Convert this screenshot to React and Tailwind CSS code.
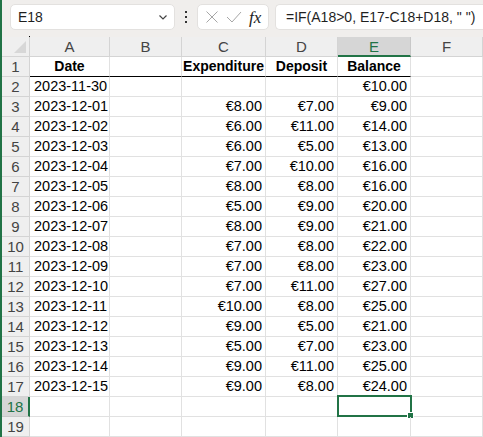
import React from "react";

const rows = [
  ["2023-11-30", "", "", "€10.00"],
  ["2023-12-01", "€8.00", "€7.00", "€9.00"],
  ["2023-12-02", "€6.00", "€11.00", "€14.00"],
  ["2023-12-03", "€6.00", "€5.00", "€13.00"],
  ["2023-12-04", "€7.00", "€10.00", "€16.00"],
  ["2023-12-05", "€8.00", "€8.00", "€16.00"],
  ["2023-12-06", "€5.00", "€9.00", "€20.00"],
  ["2023-12-07", "€8.00", "€9.00", "€21.00"],
  ["2023-12-08", "€7.00", "€8.00", "€22.00"],
  ["2023-12-09", "€7.00", "€8.00", "€23.00"],
  ["2023-12-10", "€7.00", "€11.00", "€27.00"],
  ["2023-12-11", "€10.00", "€8.00", "€25.00"],
  ["2023-12-12", "€9.00", "€5.00", "€21.00"],
  ["2023-12-13", "€5.00", "€7.00", "€23.00"],
  ["2023-12-14", "€9.00", "€11.00", "€25.00"],
  ["2023-12-15", "€9.00", "€8.00", "€24.00"],
  ["", "", "", ""],
  ["", "", "", ""],
];

const cols = ["A", "B", "C", "D", "E", "F"];
const grid = "grid grid-cols-[28px_80px_72px_84px_72px_73px_72px]";
const cell = "h-[20px] border-r border-b border-[#e1e1e1] text-[14.5px] leading-[19px] text-black whitespace-nowrap overflow-visible";
const head = "h-[20px] bg-[#efefef] border-r border-b border-[#d4d4d4] text-center text-[15px] leading-[19px] text-[#444]";

function FormulaBar() {
  return (
    <div className="h-[37px] bg-[#f0eeec] flex items-start pt-[4px] pl-[8px]">
      <div className="w-[165px] h-[26px] bg-white rounded-[5px] border border-[#e3e1df] flex items-center justify-between pl-[7px] pr-[5px]">
        <span className="text-[14px] text-[#1f1f1f]">E18</span>
        <svg width="12" height="12" viewBox="0 0 12 12" fill="none" stroke="#444" strokeWidth="1.2">
          <path d="M2.5 4.5 L6 8 L9.5 4.5" />
        </svg>
      </div>
      <div className="w-[22px] h-[26px] flex items-center justify-center">
        <svg width="4" height="14" viewBox="0 0 4 14" fill="#333">
          <rect x="1" y="1" width="2" height="2" />
          <rect x="1" y="6" width="2" height="2" />
          <rect x="1" y="11" width="2" height="2" />
        </svg>
      </div>
      <div className="w-[72px] h-[26px] bg-white rounded-[5px] border border-[#e3e1df] flex items-center pl-[7px] gap-[7px]">
        <svg width="14" height="14" viewBox="0 0 14 14" fill="none" stroke="#a6a6a6" strokeWidth="1">
          <path d="M1.5 1.5 L12.5 12.5 M12.5 1.5 L1.5 12.5" />
        </svg>
        <svg width="16" height="14" viewBox="0 0 16 14" fill="none" stroke="#a6a6a6" strokeWidth="1">
          <path d="M1 7 L6 12 L15 2" />
        </svg>
        <span className="text-[17px] italic text-[#222] leading-none" style={{ fontFamily: '"Liberation Serif", serif' }}>fx</span>
      </div>
      <div className="ml-[6px] flex-1 h-[26px] bg-white rounded-l-[5px] border border-r-0 border-[#e3e1df] flex items-center pl-[10px]">
        <span className="text-[14px] text-[#1f1f1f] whitespace-nowrap">=IF(A18&gt;0, E17-C18+D18, " ")</span>
      </div>
    </div>
  );
}

export default function App() {
  return (
    <div
      className="w-[483px] h-[437px] overflow-hidden bg-white border-l-2 border-[#217346]"
      style={{ fontFamily: '"Liberation Sans", Arial, sans-serif' }}
    >
      <FormulaBar />

      <div className={grid}>
        <div className="h-[20px] bg-[#efefef] border-r border-b border-[#d4d4d4] relative">
          <div className="absolute right-[3px] bottom-[3px] w-0 h-0 border-l-[12px] border-l-transparent border-b-[12px] border-b-[#d7d7d7]" />
          <div className="absolute -right-[1px] -top-[1px] w-[1px] h-[1px] bg-black" />
        </div>
        {cols.map((c) => (
          <div
            key={c}
            className={
              c === "E"
                ? "h-[20px] bg-[#d6d6d6] border-r border-[#c8c8c8] border-b-2 border-b-[#217346] text-center text-[15px] leading-[19px] text-[#217346]"
                : head
            }
          >
            {c}
          </div>
        ))}

        <div className={head}>1</div>
        <div className={cell + " text-center font-bold text-[14px] border-b-black"}>Date</div>
        <div className={cell + " border-b-black"}></div>
        <div className={cell + " text-center font-bold text-[14px] border-b-black"}>Expenditure</div>
        <div className={cell + " text-center font-bold text-[14px] border-b-black"}>Deposit</div>
        <div className={cell + " text-center font-bold text-[14px] border-b-black"}>Balance</div>
        <div className={cell}></div>

        {rows.map((r, i) => {
          const n = i + 2;
          const sel = n === 18;
          return (
            <React.Fragment key={n}>
              <div
                className={
                  sel
                    ? "h-[20px] bg-[#d6d6d6] border-b border-[#c8c8c8] border-r-2 border-r-[#217346] text-center text-[15px] leading-[19px] text-[#217346]"
                    : head
                }
              >
                {n}
              </div>
              <div className={cell + " pl-[4px]"}>{r[0]}</div>
              <div className={cell}></div>
              <div className={cell + " text-right pr-[3px]"}>{r[1]}</div>
              <div className={cell + " text-right pr-[3px]"}>{r[2]}</div>
              <div className={cell + " text-right pr-[3px] relative"}>
                {r[3]}
                {sel && (
                  <div className="absolute -left-[1px] -top-[2px] w-[75px] h-[22px] border-2 border-[#217346]">
                    <div className="absolute -right-[3px] -bottom-[3px] w-[5px] h-[5px] bg-[#217346] outline outline-1 outline-white" />
                  </div>
                )}
              </div>
              <div className={cell}></div>
            </React.Fragment>
          );
        })}
      </div>
    </div>
  );
}
